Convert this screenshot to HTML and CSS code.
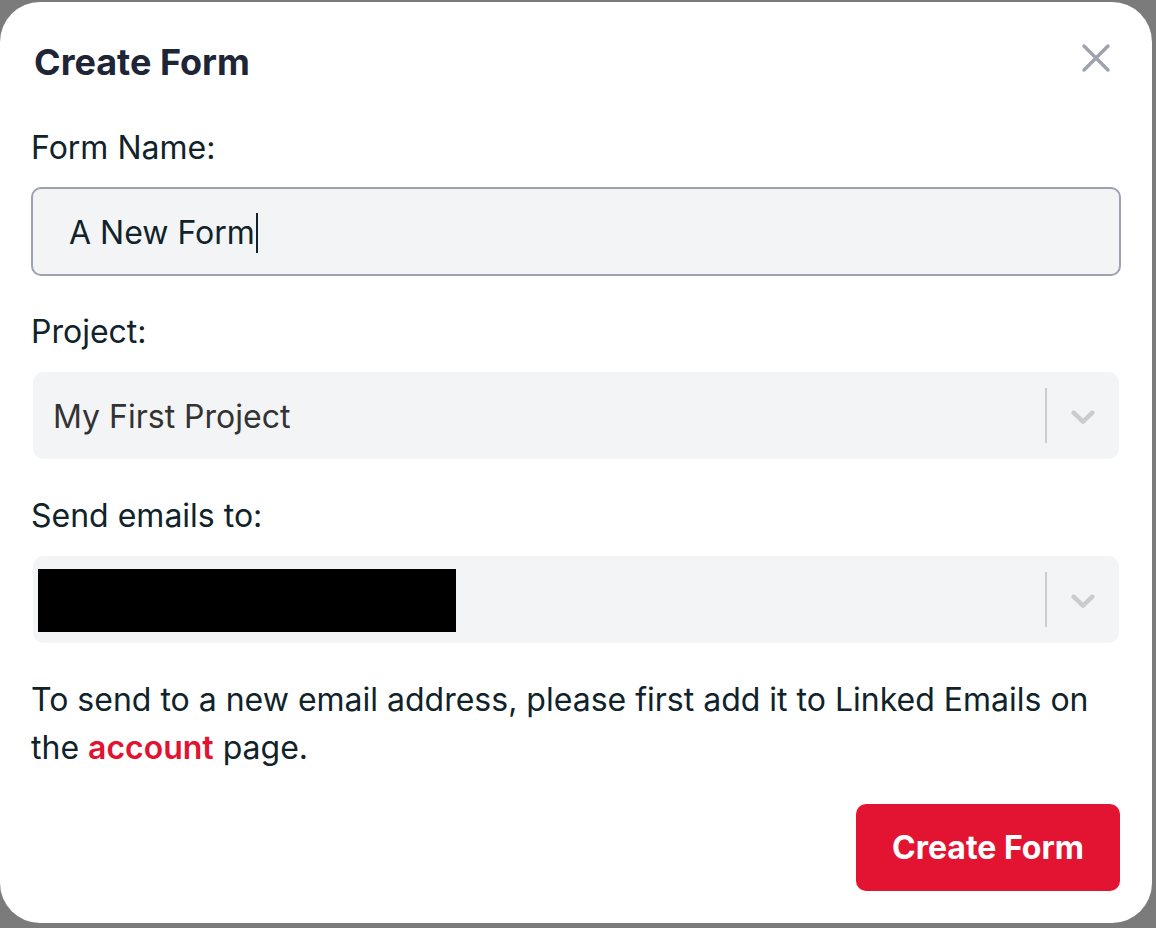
FILE: index.html
```html
<!DOCTYPE html>
<html lang="en">
<head>
<meta charset="utf-8">
<title>Create Form</title>
<link rel="stylesheet" href="styles.css">
</head>
<body>
<div class="modal">
  <div class="header">
    <h2 class="title">Create Form</h2>
    <button class="close" aria-label="Close">
      <svg width="30" height="30" viewBox="0 0 30 30"><path d="M3 3 L27 27 M27 3 L3 27" stroke="#9ca3af" stroke-width="3.4" stroke-linecap="round" fill="none"/></svg>
    </button>
  </div>

  <label class="label label-first">Form Name:</label>
  <div class="input"><span class="input-text">A New Form</span><span class="caret"></span></div>

  <label class="label">Project:</label>
  <div class="select">
    <div class="select-value">My First Project</div>
    <div class="indicators">
      <span class="sep"></span>
      <span class="chev"><svg width="40" height="40" viewBox="0 0 20 20"><path fill="#cccccc" d="M4.516 7.548c0.436-0.446 1.043-0.481 1.576 0l3.908 3.747 3.908-3.747c0.533-0.481 1.141-0.446 1.574 0 0.436 0.445 0.408 1.197 0 1.615-0.406 0.418-4.695 4.502-4.695 4.502-0.217 0.223-0.502 0.335-0.787 0.335s-0.57-0.112-0.789-0.335c0 0-4.287-4.084-4.695-4.502s-0.436-1.170 0-1.615z"/></svg></span>
    </div>
  </div>

  <label class="label">Send emails to:</label>
  <div class="select">
    <div class="select-value"><span class="redacted"></span></div>
    <div class="indicators">
      <span class="sep"></span>
      <span class="chev"><svg width="40" height="40" viewBox="0 0 20 20"><path fill="#cccccc" d="M4.516 7.548c0.436-0.446 1.043-0.481 1.576 0l3.908 3.747 3.908-3.747c0.533-0.481 1.141-0.446 1.574 0 0.436 0.445 0.408 1.197 0 1.615-0.406 0.418-4.695 4.502-4.695 4.502-0.217 0.223-0.502 0.335-0.787 0.335s-0.57-0.112-0.789-0.335c0 0-4.287-4.084-4.695-4.502s-0.436-1.170 0-1.615z"/></svg></span>
    </div>
  </div>

  <p class="note">To send to a new email address, please first add it to Linked Emails on the <a class="link" href="#">account</a> page.</p>

  <div class="actions">
    <button class="btn">Create Form</button>
  </div>
</div>
</body>
</html>
```

FILE: styles.css
```css
* { box-sizing: border-box; }
html, body { margin: 0; padding: 0; }
body {
  background: #7b7b7b;
  width: 1156px;
  height: 928px;
  overflow: hidden;
  font-family: Inter, "Noto Sans", sans-serif;
}
.modal {
  margin-top: 2px;
  width: 1152px;
  height: 921px;
  background: #ffffff;
  border-radius: 40px;
  padding: 36px 31px 0 31px;
  display: flex;
  flex-direction: column;
}
.header {
  display: flex;
  justify-content: space-between;
  align-items: center;
  height: 48px;
}
.title {
  margin: 0;
  padding-left: 3px;
  font-size: 36px;
  line-height: 48px;
  font-weight: 700;
  color: #1e2536;
}
.close {
  border: 0;
  background: none;
  padding: 0;
  margin-right: 10px;
  margin-top: -8px;
  width: 30px;
  height: 30px;
  display: flex;
}
.label {
  display: block;
  font-size: 32px;
  line-height: 48px;
  padding-top: 4px;
  color: #10232a;
  margin-top: 28px;
}
.label-first { margin-top: 34px; }
.input {
  margin-top: 15px;
  height: 89px;
  border: 2px solid #9ca3af;
  border-radius: 10px;
  background: #f3f4f6;
  padding: 0 36px;
  display: flex;
  align-items: center;
  font-size: 32px;
  line-height: 48px;
  color: #10232a;
}
.input-text { padding-top: 2px; }
.caret {
  display: inline-block;
  width: 2px;
  height: 40px;
  background: #10232a;
  margin-left: 1px;
  margin-top: 2px;
}
.select {
  margin: 16px 2px 0 2px;
  height: 87px;
  background: #f3f4f6;
  border-radius: 10px;
  display: flex;
  align-items: center;
}
.select + .label { margin-top: 29px; }
.select-value {
  flex: 1;
  padding-left: 20px;
  padding-top: 2px;
  font-size: 32px;
  line-height: 48px;
  color: #333333;
  display: flex;
  align-items: center;
}
.redacted {
  display: block;
  width: 418px;
  height: 63px;
  background: #000;
  margin-left: -15px;
}
.indicators {
  display: flex;
  align-items: center;
  align-self: stretch;
}
.sep {
  width: 2px;
  align-self: stretch;
  margin: 16px 0;
  background: #cccccc;
}
.chev {
  padding: 16px;
  display: flex;
}
.note {
  margin: 33px 0 0 0;
  font-size: 32px;
  line-height: 48px;
  color: #10232a;
}
.link {
  color: #e11330;
  font-weight: 600;
  text-decoration: none;
}
.actions {
  margin-top: 32px;
  display: flex;
  justify-content: flex-end;
}
.btn {
  height: 87px;
  width: 264px;
  margin-right: 1px;
  border: 0;
  border-radius: 10px;
  background: #e31431;
  color: #ffffff;
  font-family: Inter, "Noto Sans", sans-serif;
  font-size: 32px;
  font-weight: 700;
}
```
